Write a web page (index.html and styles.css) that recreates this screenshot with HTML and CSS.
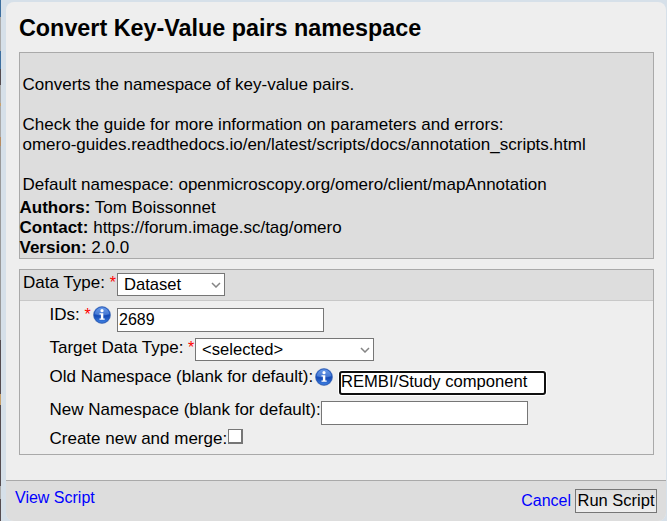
FILE: index.html
```html
<!DOCTYPE html>
<html lang="en">
<head>
<meta charset="utf-8">
<title>Convert Key-Value pairs namespace</title>
<link rel="stylesheet" href="styles.css">
</head>
<body>
<svg width="0" height="0" class="defs" aria-hidden="true">
  <defs>
    <linearGradient id="ball" x1="0" y1="0" x2="0" y2="1">
      <stop offset="0" stop-color="#4a86e6"/><stop offset=".45" stop-color="#2460cb"/>
      <stop offset=".55" stop-color="#1449b4"/><stop offset="1" stop-color="#3f82e4"/>
    </linearGradient>
    <symbol id="info" viewBox="0 0 18 18">
      <circle cx="9" cy="9" r="9" fill="#91a9d2"/>
      <circle cx="9" cy="9" r="8.1" fill="url(#ball)" stroke="#1b4cae" stroke-width=".7"/>
      <path d="M2 8a7 6.5 0 0 1 14 0Q9 11 2 8z" fill="#fff" opacity=".17"/>
      <circle cx="9" cy="4.7" r="1.6" fill="#fff"/>
      <path d="M6.5 7.2h3.8v5.3h1.4v1.3H6.5v-1.3h1.4v-4H6.5z" fill="#fff"/>
    </symbol>
  </defs>
</svg>
<div class="strip"></div>
<main class="dialog">
  <div class="content">
    <h1>Convert Key-Value pairs namespace</h1>
    <section class="description">
      <p>Converts the namespace of key-value pairs.</p>
      <p class="guide">Check the guide for more information on parameters and errors:<br>omero-guides.readthedocs.io/en/latest/scripts/docs/annotation_scripts.html</p>
      <p>Default namespace: openmicroscopy.org/omero/client/mapAnnotation</p>
      <div class="meta">
        <div><b>Authors:</b> Tom Boissonnet</div>
        <div><b>Contact:</b> https://forum.image.sc/tag/omero</div>
        <div><b>Version:</b> 2.0.0</div>
      </div>
    </section>
    <form class="fields">
      <div class="row type"><label>Data Type: <i>*</i></label><div class="select">Dataset<svg width="10" height="6"><path d="M1 1l4 4 4-4"/></svg></div></div>
      <div class="row ids"><label>IDs: <i>*</i></label><svg class="info"><use href="#info"/></svg><input type="text" value="2689"></div>
      <div class="row target"><label>Target Data Type: <i>*</i></label><div class="select">&lt;selected&gt;<svg width="10" height="6"><path d="M1 1l4 4 4-4"/></svg></div></div>
      <div class="row old"><label>Old Namespace (blank for default):</label><svg class="info"><use href="#info"/></svg><input type="text" value="REMBI/Study component"></div>
      <div class="row new"><label>New Namespace (blank for default):</label><input type="text"></div>
      <div class="row merge"><label>Create new and merge:</label><span class="check"></span></div>
    </form>
  </div>
  <footer>
    <a class="view">View Script</a>
    <a class="cancel">Cancel</a>
    <button type="button">Run Script</button>
  </footer>
</main>
</body>
</html>
```
FILE: styles.css
```css
* { box-sizing: border-box; }
body {
  margin: 0;
  height: 521px;
  overflow: hidden;
  display: flex;
  background: #d6e0e9;
  color: #000;
  font: 16px/20px "Liberation Sans", Arial, sans-serif;
}
.defs { position: absolute; }
.strip {
  width: 1px;
  margin-right: 5px;
  background: linear-gradient(#3d6f9f 0 17px, #aaa 17px 51px, #3d6f9f 51px 69px, #554c50 69px 85px, #aaa 85px 103px, #c8a16c 103px 106px, #aaa 106px 137px, #b88d62 137px 146px, #999 146px 340px, #554c50 340px 394px, #c8a16c 394px 405px, #554c50 405px 486px, #aaa 486px 499px, #554c50 499px);
}
.dialog {
  width: 660px;
  height: 519px;
  margin-top: 2px;
  display: flex;
  flex-direction: column;
  background: #eee;
  border-radius: 8px;
  overflow: hidden;
}
.content { height: 478px; padding: 0 12px 0 13px; }
h1 {
  margin: 0;
  height: 50px;
  padding-top: 12px;
  font-size: 23.35px;
  line-height: 28px;
  white-space: nowrap;
}
.description {
  height: 207px;
  padding-top: 22px;
  border: 1px solid #a9a9a9;
  background: #ddd;
  font-size: 17px;
  white-space: nowrap;
}
.description p { margin: 0 0 20px 2.5px; }
.description p:nth-of-type(3) { margin-bottom: 3px; }
.meta { margin-left: -.5px; }
.fields {
  height: 186px;
  margin-top: 10px;
  border: 1px solid #a9a9a9;
}
.row { display: flex; align-items: flex-start; padding-left: 29.5px; white-space: nowrap; }
.row label { flex: none; font-size: 17px; }
.row i { color: #f00; font-style: normal; font-size: 16px; }
.type { height: 31px; padding: 3px 0 0 3px; background: #ddd; border-bottom: 1px solid #c8c8c8; }
.type label { width: 94px; }
.ids { height: 37px; padding-top: 5px; }
.ids label { width: 43.5px; margin-top: -1px; }
.ids input { margin-top: 2px; }
.target { height: 29px; }
.target label { width: 145.5px; }
.old { height: 33px; }
.old label { width: 265.5px; }
.old .info { margin-top: 1px; }
.old input { margin-top: 4px; }
.new { height: 29px; }
.new label { width: 271.5px; }
.new input { margin-top: 1px; }
.merge label { width: 178.5px; }
.info { width: 18px; height: 18px; flex: none; margin-right: 6px; }
.old .info { margin-top: 1px; }
input {
  width: 207px;
  height: 24px;
  padding: 0 1px;
  border: 1px solid #767676;
  border-radius: 0;
  background: #fff;
  color: #000;
  font: inherit;
  outline: none;
}
.old input { border: 2px solid #101010; border-radius: 3px; box-shadow: 0 0 0 1px #fff; padding: 0 0 2px; font-size: 16.6px; }
.select {
  display: flex;
  align-items: center;
  justify-content: space-between;
  width: 108px;
  height: 23px;
  padding: 0 3px 0 6px;
  border: 1px solid #767676;
  background: #fff;
  font-size: 16.6px;
}
.target .select { width: 179px; }
.select path { fill: none; stroke: #858585; stroke-width: 1.5; }
.check { width: 15px; height: 15px; border: 1px solid #767676; border-width: 1px 2px 2px 1px; background: #fff; }
footer {
  height: 41px;
  display: flex;
  align-items: flex-start;
  padding: 8px 9px 0;
  border-top: 1px solid #a9a9a9;
  background: #ddd;
}
footer a { color: #00f; }
.view { margin: -1px auto 0 0; }
.cancel { margin: 2px 4px 0 0; }
button {
  width: 82px;
  height: 24px;
  padding: 0 0 2px;
  border: 1px solid #767676;
  background: linear-gradient(#ddd, #eee);
  color: #000;
  font: inherit;
  font-size: 16.5px;
  white-space: nowrap;
}
```
